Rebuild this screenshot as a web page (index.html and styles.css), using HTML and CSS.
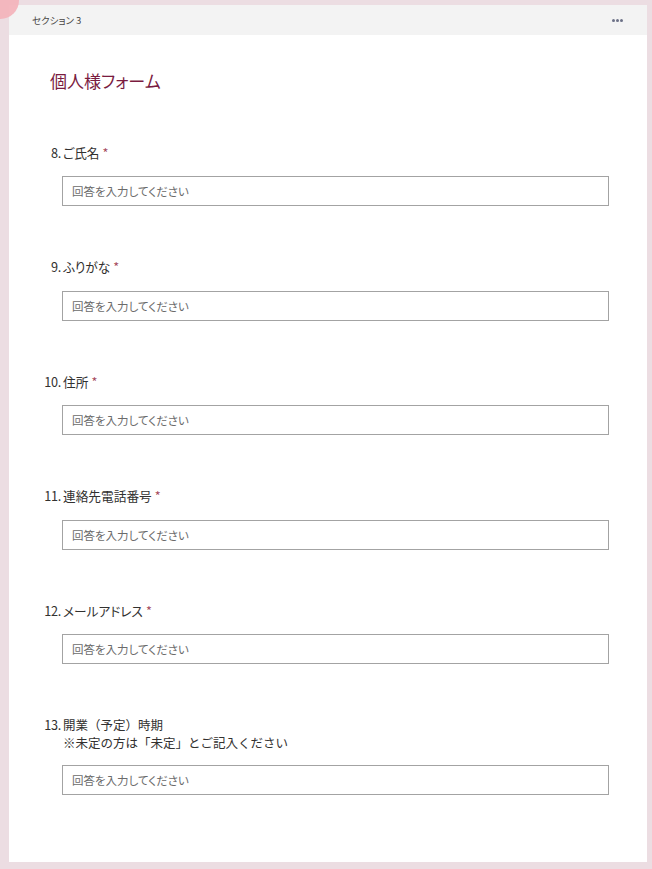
FILE: index.html
```html
<!DOCTYPE html>
<html lang="ja">
<head>
<meta charset="utf-8">
<link rel="stylesheet" href="styles.css">
</head>
<body>
<div class="blob"></div>
<div class="card">
  <div class="card-header">
    <span class="section-name">セクション 3</span>
    <span class="more"><i></i><i></i><i></i></span>
  </div>
  <div class="card-body">
    <h1 class="form-title">個人様フォーム</h1>

    <div class="question">
      <div class="q-label"><span class="q-num">8.</span><span class="q-text">ご氏名<span class="req">*</span></span></div>
      <div class="answer">回答を入力してください</div>
    </div>

    <div class="question">
      <div class="q-label"><span class="q-num">9.</span><span class="q-text">ふりがな<span class="req">*</span></span></div>
      <div class="answer">回答を入力してください</div>
    </div>

    <div class="question">
      <div class="q-label"><span class="q-num">10.</span><span class="q-text">住所<span class="req">*</span></span></div>
      <div class="answer">回答を入力してください</div>
    </div>

    <div class="question">
      <div class="q-label"><span class="q-num">11.</span><span class="q-text">連絡先電話番号<span class="req">*</span></span></div>
      <div class="answer">回答を入力してください</div>
    </div>

    <div class="question">
      <div class="q-label"><span class="q-num">12.</span><span class="q-text">メールアドレス<span class="req">*</span></span></div>
      <div class="answer">回答を入力してください</div>
    </div>

    <div class="question last">
      <div class="q-label two-line"><span class="q-num">13.</span><span class="q-text full">開業（予定）時期<br>※未定の方は「未定」とご記入ください</span></div>
      <div class="answer">回答を入力してください</div>
    </div>
  </div>
</div>
</body>
</html>
```

FILE: styles.css
```css
html, body {
  margin: 0;
  padding: 0;
}
body {
  background: #ecdde2;
  font-family: "Noto Sans CJK JP", "Noto Sans", sans-serif;
  font-feature-settings: "palt";
  color: #323130;
  width: 652px;
  height: 869px;
  overflow: hidden;
  position: relative;
}
.blob {
  position: absolute;
  left: -18px;
  top: -18px;
  width: 37px;
  height: 37px;
  border-radius: 50%;
  background: #f3b4bc;
  opacity: 0.95;
  z-index: 2;
}
.card {
  margin: 5px 0 0 9px;
  width: 638px;
  background: #ffffff;
}
.card-header {
  height: 30px;
  background: #f3f3f3;
  display: flex;
  align-items: center;
  justify-content: space-between;
  padding: 0 24px 0 23px;
}
.section-name {
  font-size: 9.5px;
  color: #484644;
  line-height: 12px;
}
.more {
  display: flex;
  gap: 1px;
  margin-top: 1px;
}
.more i {
  display: block;
  width: 3px;
  height: 3px;
  border-radius: 50%;
  background: #6c7187;
}
.card-body {
  padding: 34px 0 67px 0;
}
.form-title {
  margin: 0 0 50.5px 41px;
  font-size: 17px;
  line-height: 24px;
  font-weight: 400;
  color: #7a1b3f;
}
.question {
  padding-left: 35px;
  margin-bottom: 52px;
}
.question.last {
  margin-bottom: 0;
}
.q-label {
  display: flex;
  font-size: 12.7px;
  line-height: 17px;
  color: #323130;
}
.q-label.two-line {
  line-height: 18px;
}
.q-num {
  width: 17px;
  text-align: right;
  flex: none;
  letter-spacing: -0.3px;
}
.q-text {
  padding-left: 2px;
}
.q-text.full {
  font-feature-settings: normal;
  font-size: 12.5px;
}
.req {
  color: #a4485a;
  margin-left: 3px;
}
.answer {
  margin: 15.5px 0 0 18px;
  width: 547px;
  height: 30px;
  box-sizing: border-box;
  border: 1px solid #a3a3a3;
  padding-left: 9px;
  font-size: 11.5px;
  line-height: 28px;
  color: #6b6b6b;
}
.two-line + .answer {
  margin-top: 12.5px;
}
```
